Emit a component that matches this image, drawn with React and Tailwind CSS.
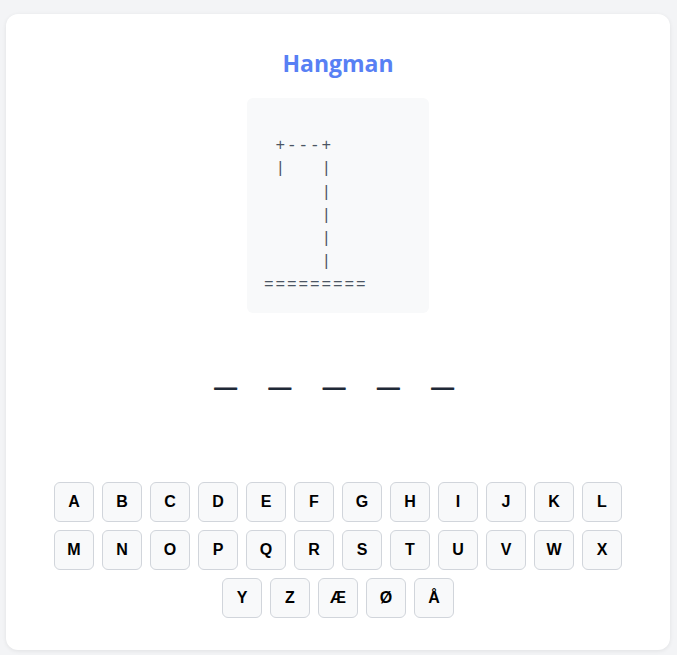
const art = `
 +---+
 |   |
     |
     |
     |
     |
=========`;

const rows = [
  ["A","B","C","D","E","F","G","H","I","J","K","L"],
  ["M","N","O","P","Q","R","S","T","U","V","W","X"],
  ["Y","Z","Æ","Ø","Å"],
];

export default function App() {
  return (
    <div className="min-h-[655px] bg-[#f3f4f6] pl-[6px] pr-[7px] pt-[14px] pb-[5px]">
      <div className="flex h-[636px] flex-col items-center rounded-xl bg-white pt-[35px] shadow-[0_1px_4px_rgba(0,0,0,0.08)]">
        <h1 className="text-[23px] font-bold leading-[28px] text-[#5880f4] [font-family:'Open_Sans',sans-serif]">Hangman</h1>
        <pre className="mt-[21px] h-[215px] w-[182px] rounded-md bg-[#f8f9fa] px-[17px] pt-[14px] pb-[15px] text-[16px] leading-[23.2px] tracking-[1.9px] text-[#4b5563] [font-family:'Liberation_Mono',monospace]">{art}</pre>
        <div className="mt-[32px] mr-[8px] flex h-[50px] gap-[32px] text-[40px] font-bold leading-[50px] text-[#1f2937] [font-family:'Liberation_Sans',sans-serif]">
          {[0,1,2,3,4].map((i) => (
            <span key={i} className="[text-shadow:0_1px_0_#1f2937]">_</span>
          ))}
        </div>
        <div className="mt-[87px] flex flex-col items-center gap-2">
          {rows.map((row, ri) => (
            <div key={ri} className="flex gap-2">
              {row.map((l) => (
                <button
                  key={l}
                  className="flex h-10 w-10 items-center justify-center rounded-md border border-[#d1d5db] bg-[#f8f9fa] text-[16px] font-bold text-black [font-family:'Liberation_Sans',sans-serif]"
                >
                  {l}
                </button>
              ))}
            </div>
          ))}
        </div>
      </div>
    </div>
  );
}
